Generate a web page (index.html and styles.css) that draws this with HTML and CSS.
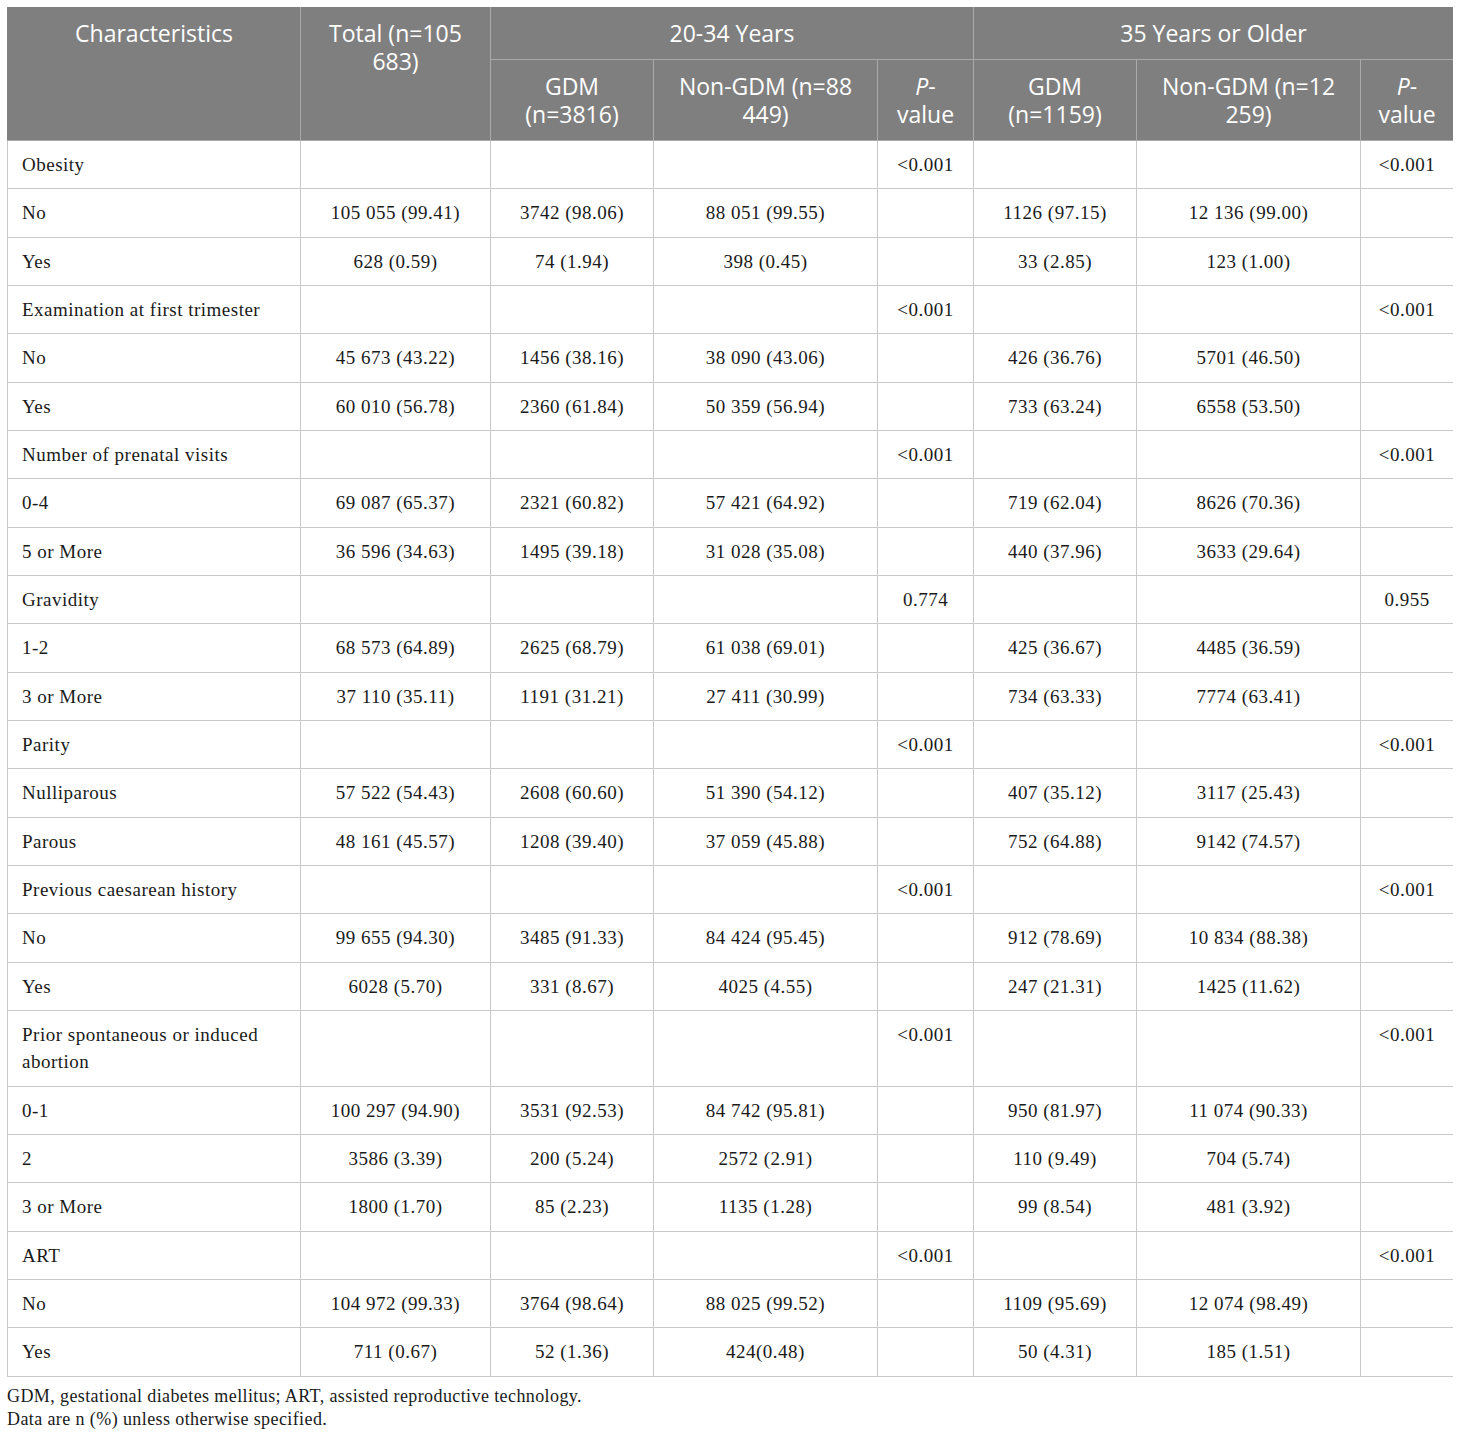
FILE: index.html
```html
<!DOCTYPE html>
<html lang="en">
<head>
  <meta charset="UTF-8">
  <title>Maternal characteristics by age group</title>
  <link rel="stylesheet" href="styles.css">
</head>
<body>
  <div class="table-wrap">
    <table class="data-table">
      <colgroup>
        <col style="width: 293px">
        <col style="width: 190px">
        <col style="width: 163px">
        <col style="width: 224px">
        <col style="width: 96px">
        <col style="width: 163px">
        <col style="width: 224px">
        <col style="width: 93px">
      </colgroup>
      <thead>
        <tr>
          <th rowspan="2">Characteristics</th>
          <th rowspan="2">Total (n=105<br>683)</th>
          <th colspan="3">20-34 Years</th>
          <th colspan="3">35 Years or Older</th>
        </tr>
        <tr>
          <th>GDM<br>(n=3816)</th>
          <th>Non-GDM (n=88<br>449)</th>
          <th><i>P</i>-<br>value</th>
          <th>GDM<br>(n=1159)</th>
          <th>Non-GDM (n=12<br>259)</th>
          <th><i>P</i>-<br>value</th>
        </tr>
      </thead>
      <tbody>
        <tr><td>Obesity</td><td></td><td></td><td></td><td>&lt;0.001</td><td></td><td></td><td>&lt;0.001</td></tr>
        <tr><td>No</td><td>105 055 (99.41)</td><td>3742 (98.06)</td><td>88 051 (99.55)</td><td></td><td>1126 (97.15)</td><td>12 136 (99.00)</td><td></td></tr>
        <tr><td>Yes</td><td>628 (0.59)</td><td>74 (1.94)</td><td>398 (0.45)</td><td></td><td>33 (2.85)</td><td>123 (1.00)</td><td></td></tr>
        <tr><td>Examination at first trimester</td><td></td><td></td><td></td><td>&lt;0.001</td><td></td><td></td><td>&lt;0.001</td></tr>
        <tr><td>No</td><td>45 673 (43.22)</td><td>1456 (38.16)</td><td>38 090 (43.06)</td><td></td><td>426 (36.76)</td><td>5701 (46.50)</td><td></td></tr>
        <tr><td>Yes</td><td>60 010 (56.78)</td><td>2360 (61.84)</td><td>50 359 (56.94)</td><td></td><td>733 (63.24)</td><td>6558 (53.50)</td><td></td></tr>
        <tr><td>Number of prenatal visits</td><td></td><td></td><td></td><td>&lt;0.001</td><td></td><td></td><td>&lt;0.001</td></tr>
        <tr><td>0-4</td><td>69 087 (65.37)</td><td>2321 (60.82)</td><td>57 421 (64.92)</td><td></td><td>719 (62.04)</td><td>8626 (70.36)</td><td></td></tr>
        <tr><td>5 or More</td><td>36 596 (34.63)</td><td>1495 (39.18)</td><td>31 028 (35.08)</td><td></td><td>440 (37.96)</td><td>3633 (29.64)</td><td></td></tr>
        <tr><td>Gravidity</td><td></td><td></td><td></td><td>0.774</td><td></td><td></td><td>0.955</td></tr>
        <tr><td>1-2</td><td>68 573 (64.89)</td><td>2625 (68.79)</td><td>61 038 (69.01)</td><td></td><td>425 (36.67)</td><td>4485 (36.59)</td><td></td></tr>
        <tr><td>3 or More</td><td>37 110 (35.11)</td><td>1191 (31.21)</td><td>27 411 (30.99)</td><td></td><td>734 (63.33)</td><td>7774 (63.41)</td><td></td></tr>
        <tr><td>Parity</td><td></td><td></td><td></td><td>&lt;0.001</td><td></td><td></td><td>&lt;0.001</td></tr>
        <tr><td>Nulliparous</td><td>57 522 (54.43)</td><td>2608 (60.60)</td><td>51 390 (54.12)</td><td></td><td>407 (35.12)</td><td>3117 (25.43)</td><td></td></tr>
        <tr><td>Parous</td><td>48 161 (45.57)</td><td>1208 (39.40)</td><td>37 059 (45.88)</td><td></td><td>752 (64.88)</td><td>9142 (74.57)</td><td></td></tr>
        <tr><td>Previous caesarean history</td><td></td><td></td><td></td><td>&lt;0.001</td><td></td><td></td><td>&lt;0.001</td></tr>
        <tr><td>No</td><td>99 655 (94.30)</td><td>3485 (91.33)</td><td>84 424 (95.45)</td><td></td><td>912 (78.69)</td><td>10 834 (88.38)</td><td></td></tr>
        <tr><td>Yes</td><td>6028 (5.70)</td><td>331 (8.67)</td><td>4025 (4.55)</td><td></td><td>247 (21.31)</td><td>1425 (11.62)</td><td></td></tr>
        <tr><td>Prior spontaneous or induced<br>abortion</td><td></td><td></td><td></td><td>&lt;0.001</td><td></td><td></td><td>&lt;0.001</td></tr>
        <tr><td>0-1</td><td>100 297 (94.90)</td><td>3531 (92.53)</td><td>84 742 (95.81)</td><td></td><td>950 (81.97)</td><td>11 074 (90.33)</td><td></td></tr>
        <tr><td>2</td><td>3586 (3.39)</td><td>200 (5.24)</td><td>2572 (2.91)</td><td></td><td>110 (9.49)</td><td>704 (5.74)</td><td></td></tr>
        <tr><td>3 or More</td><td>1800 (1.70)</td><td>85 (2.23)</td><td>1135 (1.28)</td><td></td><td>99 (8.54)</td><td>481 (3.92)</td><td></td></tr>
        <tr><td>ART</td><td></td><td></td><td></td><td>&lt;0.001</td><td></td><td></td><td>&lt;0.001</td></tr>
        <tr><td>No</td><td>104 972 (99.33)</td><td>3764 (98.64)</td><td>88 025 (99.52)</td><td></td><td>1109 (95.69)</td><td>12 074 (98.49)</td><td></td></tr>
        <tr><td>Yes</td><td>711 (0.67)</td><td>52 (1.36)</td><td>424(0.48)</td><td></td><td>50 (4.31)</td><td>185 (1.51)</td><td></td></tr>
      </tbody>
    </table>
    <div class="notes">
      <p>GDM, gestational diabetes mellitus; ART, assisted reproductive technology.</p>
      <p>Data are n (%) unless otherwise specified.</p>
    </div>
  </div>
</body>
</html>
```

FILE: styles.css
```css
body {
  margin: 7px;
  background: #fff;
  color: #1a1a1a;
  font-family: "Liberation Serif", "Times New Roman", serif;
}

.table-wrap {
  width: 1446px;
}

.data-table {
  width: 1446px;
  table-layout: fixed;
  border-collapse: collapse;
}

.data-table th {
  background-color: #7f7f7f;
  color: #fff;
  font-family: "Open Sans", "Noto Sans", sans-serif;
  font-weight: normal;
  font-size: 23px;
  line-height: 28px;
  padding: 12px 8px;
  text-align: center;
  vertical-align: top;
  border: 1px solid #a9a9a9;
  border-top: none;
}

.data-table th:first-child {
  border-left: 1px solid #7f7f7f;
}

.data-table thead tr:first-child th:last-child,
.data-table thead tr:last-child th:last-child {
  border-right: 1px solid #7f7f7f;
}

.data-table td {
  font-size: 19px;
  letter-spacing: 0.5px;
  line-height: 27.33px;
  padding: 10px 14px;
  text-align: center;
  vertical-align: top;
  border: 1px solid #c9c9c9;
}

.data-table td:first-child {
  text-align: left;
}

.notes {
  margin-top: 8px;
}

.notes p {
  margin: 0;
  font-size: 18px;
  letter-spacing: 0.4px;
  line-height: 23px;
}
```
